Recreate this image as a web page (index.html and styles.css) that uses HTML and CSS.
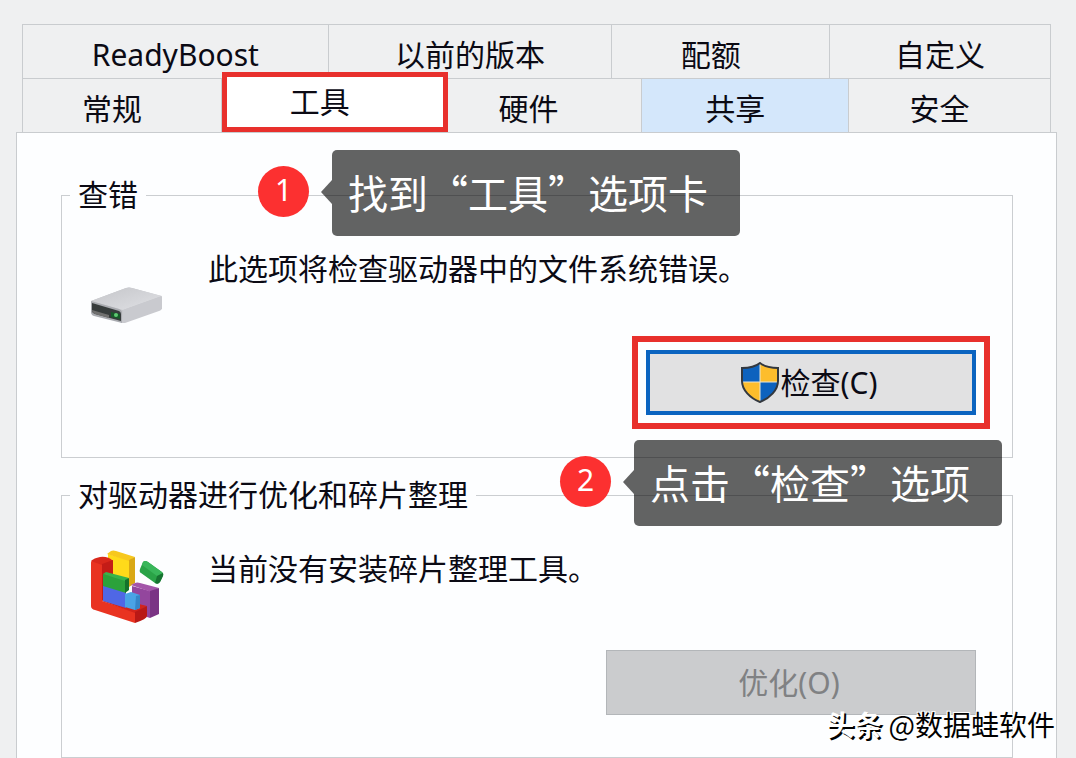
FILE: index.html
```
<!DOCTYPE html>
<html lang="zh-CN">
<head>
    <meta charset="UTF-8">
    <meta name="viewport" content="width=device-width, initial-scale=1.0">
    <title>磁盘属性</title>
    <link rel="stylesheet" href="styles.css">
</head>
<body>

    <main class="dialog">
        <div class="tabs">
            <div class="tab-row tab-row-back">
                <button type="button" class="tab">ReadyBoost</button>
                <button type="button" class="tab">以前的版本</button>
                <button type="button" class="tab shifted">配额</button>
                <button type="button" class="tab">自定义</button>
            </div>
            <div class="tab-row tab-row-front">
                <button type="button" class="tab shifted">常规</button>
                <button type="button" class="tab active">工具</button>
                <button type="button" class="tab after-active">硬件</button>
                <button type="button" class="tab shifted hovered">共享</button>
                <button type="button" class="tab shifted">安全</button>
            </div>
        </div>

        <section class="panel">
            <fieldset class="group">
                <legend>查错</legend>
                <div class="info">
                    <svg class="icon" viewBox="0 0 80 80" aria-hidden="true">
                        <defs>
                            <linearGradient id="driveTop" x1="0" y1="0" x2="1" y2="1">
                                <stop offset="0" stop-color="#c4c5c9"/>
                                <stop offset="1" stop-color="#e0e1e5"/>
                            </linearGradient>
                        </defs>
                        <path d="M5 54 L40 41 Q43 40 46 41 L75 49 L76 62 L36 76 Z" fill="#c5c6ca"/>
                        <path d="M5 54 L40 41 Q43 40 46 41 L76 49 L37 63 Z" fill="url(#driveTop)"/>
                        <path d="M37 63 L76 49 V60 Q76 63 73 64 L39 76 L36 76 Z" fill="#c9cacf"/>
                        <path d="M5 54 L33 62 Q36 63 36 66 V76 L8 69 Q5 68 5 65 V55 Z" fill="#a9abb0"/>
                        <path d="M6 56 L33 64 Q35 65 35 67 V74 L9 67 Q6 66 6 64 Z" fill="#373c3c"/>
                        <path d="M6 63 L23 68 V71 L9 67 Q7 66 6 64 Z" fill="#70706f"/>
                        <path d="M25 65 L34 67 V72 L25 70 Z" fill="#175b2a"/>
                        <circle cx="30" cy="68" r="2" fill="#5fca72"/>
                    </svg>
                    <p>此选项将检查驱动器中的文件系统错误。</p>
                </div>
                <div class="actions">
                    <button type="button" class="btn btn-check">
                        <svg class="shield" viewBox="0 0 38 42" aria-hidden="true">
                            <clipPath id="shieldShape">
                                <path d="M19 1 C14 5 8 6 1 6 V19 C1 28 9 36 19 40 C29 36 37 28 37 19 V6 C30 6 24 5 19 1 Z"/>
                            </clipPath>
                            <g clip-path="url(#shieldShape)">
                                <path d="M0 0 H19 V20 H0 Z M19 20 H38 V42 H19 Z" fill="#0d62be"/>
                                <path d="M19 0 H38 V20 H19 Z M0 20 H19 V42 H0 Z" fill="#fdbd2c"/>
                                <path d="M19 0 V42 M0 20 H38" stroke="#e9e5d4" stroke-width="1"/>
                            </g>
                            <path d="M19 1 C14 5 8 6 1 6 V19 C1 28 9 36 19 40 C29 36 37 28 37 19 V6 C30 6 24 5 19 1 Z" fill="none" stroke="#33383f" stroke-width="2"/>
                        </svg>
                        <span>检查(C)</span>
                    </button>
                </div>
            </fieldset>

            <fieldset class="group">
                <legend>对驱动器进行优化和碎片整理</legend>
                <div class="info">
                    <svg class="icon" viewBox="0 0 80 80" aria-hidden="true">
                        <!-- yellow -->
                        <path d="M22 7 L43 13 V40 L22 33 Z" fill="#ffda1a"/>
                        <path d="M21 7 L25 4 Q27 3 30 4 L49 10 L43 14 Z" fill="#f7c81e"/>
                        <path d="M43 13 L49 10 V36 L43 40 Z" fill="#d9a815"/>
                        <!-- purple -->
                        <path d="M46 39 L64 44 V71 L46 65 Z" fill="#93469d"/>
                        <path d="M45 38 L49 36 Q51 35 54 36 L73 41 L65 45 Z" fill="#a355a9"/>
                        <path d="M64 44 L73 41 V67 L64 71 Z" fill="#7a3484"/>
                        <!-- red -->
                        <path d="M5 16 Q5 13 8 13 L16 15 V54 L49 65 V76 L9 63 Q5 62 5 59 Z" fill="#e93321"/>
                        <path d="M5 14 Q8 11 14 10 Q22 9 27 14 L16 18 Z" fill="#d9281c"/>
                        <path d="M16 17 L27 13 V49 L16 54 Z" fill="#c41c17"/>
                        <path d="M16 54 L24 50 L61 59 L49 66 Z" fill="#d3241b"/>
                        <path d="M49 65 L61 59 V69 Q61 72 49 76 Z" fill="#b91916"/>
                        <!-- blue -->
                        <path d="M17 38 L40 45 V61 L17 54 Z" fill="#4f67e5"/>
                        <path d="M39 47 L45 45 L54 48 V61 L49 63 L39 60 Z" fill="#4aa3e5"/>
                        <path d="M50 49 L54 48 V61 L49 63 Z" fill="#3585c8"/>
                        <!-- green -->
                        <path d="M17 27 L40 33 V46 L17 39 Z" fill="#2ba23b"/>
                        <path d="M17 27 L20 25 L43 31 L39 34 Z" fill="#37b44b"/>
                        <path d="M39 33 L43 31 V43 L39 46 Z" fill="#14722b"/>
                        <path d="M57 15 Q59 13 62 15 L76 25 Q78 27 77 29 L74 35 Q72 38 69 36 L55 26 Q53 25 54 22 Z" fill="#2aa347"/>
                        <path d="M57 15 Q59 13 62 15 L77 26 L71 29 L56 18 Z" fill="#39b65a"/>
                        <path d="M71 29 L77 26 Q78 28 76 31 L74 35 Q72 38 69 36 Z" fill="#177331"/>
                    </svg>
                    <p>当前没有安装碎片整理工具。</p>
                </div>
                <div class="actions">
                    <button type="button" class="btn btn-optimize" disabled>优化(O)</button>
                </div>
            </fieldset>
        </section>

        <!-- guide steps over the dialog -->
        <div class="step step-tab">
            <span class="step-number">1</span>
            <span class="step-text">找到“工具”选项卡</span>
        </div>
        <div class="step step-check">
            <span class="step-number">2</span>
            <span class="step-text">点击“检查”选项</span>
        </div>

        <div class="watermark"><b>头条</b> @数据蛙软件</div>
    </main>

</body>
</html>
```

FILE: styles.css
```
* {
    box-sizing: border-box;
}
body {
    margin: 0;
    background-color: #eff0f1;
    color: #0b0a14;
    font-family: "Noto Sans", "Noto Sans CJK SC", sans-serif;
    font-size: 30px;
    line-height: 40px;
}
button {
    font: inherit;
    color: inherit;
    border-radius: 0;
    cursor: pointer;
}
.dialog {
    position: relative;
    height: 100vh;
    min-height: 758px;
    padding: 24px 19px 0 16px;
    overflow: hidden;
}
.tabs {
    padding: 0 6px;
}
.tab-row {
    display: grid;
    height: 54px;
    border-left: 1px solid #c9cccf;
}
.tab-row-back {
    grid-template-columns: 306fr 284fr 218fr 221fr;
}
.tab-row-front {
    grid-template-columns: 199fr 226fr 195fr 207fr 202fr;
}
.tab {
    min-width: 0;
    padding: 6px 0 0;
    border: 1px solid #c9cccf;
    border-width: 1px 1px 0 0;
    background-color: #eff0f1;
    white-space: nowrap;
}
.tab.shifted {
    padding-right: 20px;
}
.tab.after-active {
    padding-right: 32px;
}
.tab.hovered {
    background-color: #d4e7fb;
}
.tab.active {
    margin-top: -6px;
    padding: 0 30px 0 0;
    border: 5px solid #e8302c;
    background-color: #fff;
}
.panel {
    min-height: 100%;
    padding: 42px 43px 0 44px;
    border: 1px solid #c9cccf;
    background-color: #fdfeff;
}
.group {
    min-width: 0;
    height: 283px;
    margin: 0 0 17px;
    padding: 32px 36px 0 16px;
    border: 1px solid #cbced1;
}
.group legend {
    margin-left: -8px;
    padding: 0 8px;
}
.info {
    display: flex;
    gap: 42px;
    padding-left: 8px;
}
.info p {
    margin: 2px 0 0;
}
.icon {
    flex: none;
    width: 80px;
    height: 80px;
}
.actions {
    display: flex;
    justify-content: flex-end;
    margin-top: 23px;
}
.btn {
    display: flex;
    align-items: center;
    justify-content: center;
    height: 65px;
    padding: 0 4px 0 0;
}
.btn-check {
    width: 330px;
    border: 4px solid #0b64c0;
    background-color: #e1e1e2;
    outline: 6px solid #e8302c;
    outline-offset: 8px;
}
.btn-optimize {
    width: 370px;
    border: 1px solid #b3b6b9;
    background-color: #cbccce;
    color: #808183;
    cursor: default;
}
.shield {
    width: 38px;
    height: 42px;
    margin-right: 2px;
}
.step {
    position: absolute;
    display: flex;
    align-items: flex-start;
    gap: 23px;
}
.step-tab {
    top: 150px;
    left: 258px;
}
.step-check {
    top: 440px;
    left: 560px;
}
.step-number {
    width: 51px;
    height: 51px;
    margin-top: 16px;
    border-radius: 50%;
    background-color: #fc3030;
    color: #fff;
    line-height: 48px;
    text-align: center;
}
.step-text {
    position: relative;
    padding: 12px 32px 14px 16px;
    border-radius: 5px;
    background-color: rgba(0, 0, 0, 0.61);
    color: #fff;
    font-family: "Noto Sans CJK SC", sans-serif;
    font-size: 40px;
    line-height: 60px;
    white-space: nowrap;
}
/* arrow pointing at the number */
.step-text::before {
    content: "";
    position: absolute;
    top: 30px;
    right: 100%;
    border: 12px solid transparent;
    border-left-width: 0;
    border-right: 11px solid rgba(0, 0, 0, 0.61);
}
.watermark {
    position: absolute;
    right: 21px;
    bottom: 14px;
    color: #000;
    font-family: "Noto Sans CJK SC", sans-serif;
    font-size: 28px;
    text-shadow: -1px -1px 0 #fff, 1px -1px 0 #fff, -1px 1px 0 #fff, 1px 1px 0 #fff;
    white-space: nowrap;
}
.watermark b {
    color: #fff;
    text-shadow: 2px 2px 0 #000;
}
```
